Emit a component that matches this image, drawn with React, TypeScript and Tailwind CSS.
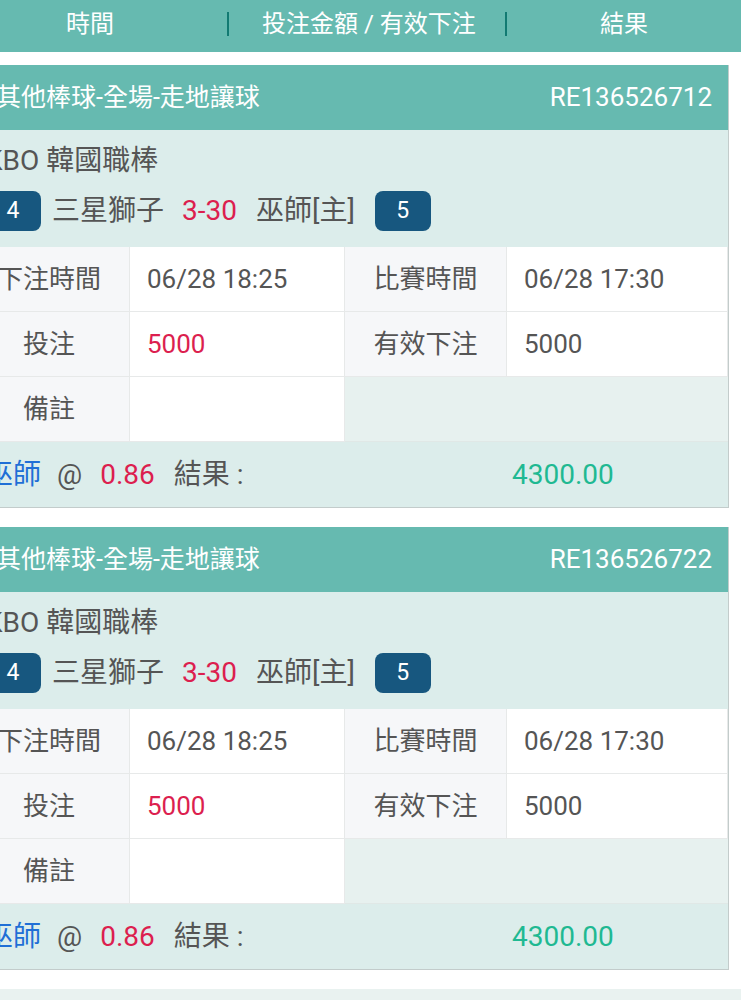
import React from "react";

type Bet = {
  market: string;
  ticket: string;
  league: string;
  home: string;
  homeNo: string;
  score: string;
  away: string;
  awayNo: string;
  betTime: string;
  matchTime: string;
  stake: string;
  valid: string;
  pick: string;
  odds: string;
  result: string;
};

const bets: Bet[] = [
  {
    market: "其他棒球-全場-走地讓球",
    ticket: "RE136526712",
    league: "KBO 韓國職棒",
    home: "三星獅子",
    homeNo: "4",
    score: "3-30",
    away: "巫師[主]",
    awayNo: "5",
    betTime: "06/28 18:25",
    matchTime: "06/28 17:30",
    stake: "5000",
    valid: "5000",
    pick: "巫師",
    odds: "0.86",
    result: "4300.00",
  },
  {
    market: "其他棒球-全場-走地讓球",
    ticket: "RE136526722",
    league: "KBO 韓國職棒",
    home: "三星獅子",
    homeNo: "4",
    score: "3-30",
    away: "巫師[主]",
    awayNo: "5",
    betTime: "06/28 18:25",
    matchTime: "06/28 17:30",
    stake: "5000",
    valid: "5000",
    pick: "巫師",
    odds: "0.86",
    result: "4300.00",
  },
];

const labelCell =
  "h-[65px] bg-[#f6f7f9] border-r border-b border-[#e7e9e9] flex items-center justify-center text-[26px] text-[#555]";
const valueCell =
  "h-[65px] bg-white border-r border-b border-[#e7e9e9] flex items-center pl-[17px] text-[26px] text-[#555]";

const Badge = ({ n }: { n: string }) => (
  <div className="w-[56px] h-[40px] rounded-[8px] bg-[#17577f] text-white text-[23px] flex items-center justify-center">
    {n}
  </div>
);

const BetCard = ({ bet }: { bet: Bet }) => (
  <div className="-ml-[31px] w-[760px] border-r border-b border-[#c3cccb] bg-[#dcedeb]">
    {/* card header */}
    <div className="h-[65px] bg-[#66bab0] flex items-center justify-between pl-[27px] pr-[16px] text-white text-[25px]">
      <span>{bet.market}</span>
      <span className="text-[26px]">{bet.ticket}</span>
    </div>

    {/* match info */}
    <div className="h-[117px] px-[16px] pt-[11px] text-[#555]">
      <div className="h-[40px] flex items-center text-[28px]">{bet.league}</div>
      <div className="h-[40px] mt-[10px] flex items-center text-[28px]">
        <Badge n={bet.homeNo} />
        <span className="ml-[11px]">{bet.home}</span>
        <span className="ml-[18px] text-[#dc1f4f]">{bet.score}</span>
        <span className="ml-[19px]">{bet.away}</span>
        <div className="ml-[20px]">
          <Badge n={bet.awayNo} />
        </div>
      </div>
    </div>

    {/* details table */}
    <div className="grid grid-cols-[161px_215px_162px_1fr]">
      <div className={labelCell}>下注時間</div>
      <div className={valueCell}>{bet.betTime}</div>
      <div className={labelCell}>比賽時間</div>
      <div className={valueCell}>{bet.matchTime}</div>

      <div className={labelCell}>投注</div>
      <div className={valueCell + " !text-[#dc1f4f]"}>{bet.stake}</div>
      <div className={labelCell}>有效下注</div>
      <div className={valueCell}>{bet.valid}</div>

      <div className={labelCell}>備註</div>
      <div className={valueCell}></div>
      <div className="col-span-2 h-[65px] bg-[#e7f1ef] border-b border-[#e0e8e6]"></div>
    </div>

    {/* footer */}
    <div className="h-[65px] flex items-center pl-[16px] text-[28px] text-[#555]">
      <div className="w-[527px] flex items-center">
        <span className="text-[#1f6fd6]">{bet.pick}</span>
        <span className="ml-[16px]">@</span>
        <span className="ml-[18px] text-[#dc1f4f]">{bet.odds}</span>
        <span className="ml-[19px]">結果 :</span>
      </div>
      <span className="text-[#1fb992]">{bet.result}</span>
    </div>
  </div>
);

export default function App() {
  return (
    <div
      className="w-[741px] h-[1000px] overflow-hidden bg-white"
      style={{ fontFamily: 'Roboto, "Noto Sans CJK TC", sans-serif' }}
    >
      {/* column header */}
      <div className="h-[52px] pb-[5px] bg-[#66bab0] flex items-center text-white text-[24px]">
        <div className="w-[180px] text-center">時間</div>
        <div className="ml-[47px] w-[2px] h-[24px] bg-[#127a72]"></div>
        <div className="ml-[33px]">投注金額 / 有效下注</div>
        <div className="ml-[29px] w-[2px] h-[24px] bg-[#127a72]"></div>
        <div className="flex-1 text-center">結果</div>
      </div>

      <div className="pt-[13px] flex flex-col gap-[19px]">
        {bets.map((b) => (
          <BetCard key={b.ticket} bet={b} />
        ))}
        <div className="-ml-[31px] w-[772px] h-[60px] bg-[#e9f2f0]"></div>
      </div>
    </div>
  );
}
